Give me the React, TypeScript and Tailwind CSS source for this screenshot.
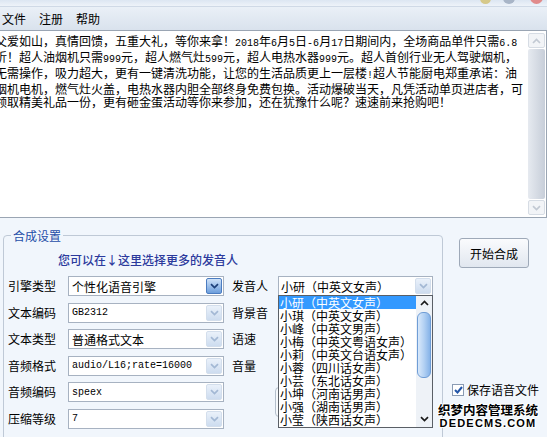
import React from 'react';

const textLines = [
  '父爱如山，真情回馈，五重大礼，等你来拿！2018年6月5日-6月17日期间内，全场商品单件只需6.8',
  '折！超人油烟机只需999元，超人燃气灶599元，超人电热水器999元。超人首创行业无人驾驶烟机，',
  '无需操作，吸力超大，更有一键清洗功能，让您的生活品质更上一层楼!超人节能厨电郑重承诺：油',
  '烟机电机，燃气灶火盖，电热水器内胆全部终身免费包换。活动爆破当天，凡凭活动单页进店者，可',
  '领取精美礼品一份，更有砸金蛋活动等你来参加，还在犹豫什么呢？速速前来抢购吧！',
];

const speakers = [
  '小研（中英文女声）',
  '小琪（中英文女声）',
  '小峰（中英文男声）',
  '小梅（中英文粤语女声）',
  '小莉（中英文台语女声）',
  '小蓉（四川话女声）',
  '小芸（东北话女声）',
  '小坤（河南话男声）',
  '小强（湖南话男声）',
  '小莹（陕西话女声）',
];

const rows = [
  { label: '引擎类型', value: '个性化语音引擎', mono: false, active: true, right: '发音人' },
  { label: '文本编码', value: 'GB2312', mono: true, active: false, right: '背景音' },
  { label: '文本类型', value: '普通格式文本', mono: false, active: false, right: '语速' },
  { label: '音频格式', value: 'audio/L16;rate=16000', mono: true, active: false, right: '音量' },
  { label: '音频编码', value: 'speex', mono: true, active: false, right: '' },
  { label: '压缩等级', value: '7', mono: true, active: false, right: '' },
];

// half-width runs (digits etc.) get a narrow mono font so widths match the old bitmap font
const renderLine = (line: string) =>
  line.split(/([\x21-\x7e]+)/).map((part, i) =>
    /^[\x21-\x7e]+$/.test(part) ? (
      <span key={i} className="font-['Liberation_Mono',monospace] text-[10px]">
        {part}
      </span>
    ) : (
      <span key={i}>{part}</span>
    )
  );

const Chevron = ({ up = false, color }: { up?: boolean; color: string }) => (
  <svg width="9" height="6" viewBox="0 0 9 6">
    <polyline
      points={up ? '1,5 4.5,1.5 8,5' : '1,1.2 4.5,4.6 8,1.2'}
      fill="none"
      stroke={color}
      strokeWidth="1.7"
    />
  </svg>
);

const DropButton = ({ active }: { active: boolean }) =>
  active ? (
    <div className="mr-[1px] ml-auto flex h-[16px] w-[16px] shrink-0 items-center justify-center rounded-[2px] border border-[#4b7cc0] bg-gradient-to-b from-[#cfe2f8] to-[#6c9edc]">
      <Chevron color="#1d3f78" />
    </div>
  ) : (
    <div className="mr-[1px] ml-auto flex h-[16px] w-[16px] shrink-0 items-center justify-center rounded-[2px] border border-[#d3deec] bg-gradient-to-b from-[#eaf1fa] to-[#cddcef]">
      <Chevron color="#a3b8d4" />
    </div>
  );

export default function App() {
  return (
    <div className="relative flex h-[437px] w-[547px] flex-col overflow-hidden bg-[#f1f6fc] font-['Noto_Sans_CJK_SC',sans-serif] text-[12px] leading-[13px] text-black">
      {/* title bar remnant */}
      <div className="flex h-[7px] shrink-0 items-start border-b border-[#cfd9e6] bg-gradient-to-b from-[#dce6f2] to-[#eef3f9]">
        <span className="-mt-[10px] ml-[480px] h-[14px] w-[11px] rounded-full bg-[#d6c98a]" />
        <span className="-mt-[10px] ml-[12px] h-[14px] w-[12px] rounded-full bg-[#a8b5c7]" />
        <span className="-mt-[10px] ml-[15px] h-[14px] w-[13px] rounded-full bg-[#e18b8b]" />
      </div>

      {/* menu bar */}
      <div className="flex h-[23px] shrink-0 items-center gap-[13px] bg-gradient-to-b from-[#eaf0f7] to-[#d9e2ed] pl-[2px] text-[12px]">
        <span>文件</span>
        <span>注册</span>
        <span>帮助</span>
      </div>

      {/* text area */}
      <div className="flex h-[188px] shrink-0 border-t border-b border-r border-[#9aa5b3] bg-white">
        <div className="min-w-0 flex-1 overflow-hidden pt-[3px]">
          {textLines.map((line) => (
            <div key={line} className="-ml-[5px] whitespace-nowrap text-[12px] leading-[13px]">
              {renderLine(line)}
            </div>
          ))}
        </div>
        <div className="my-[2px] mr-[1px] flex w-[17px] flex-col">
          <div className="flex h-[15px] items-center justify-center rounded-[2px] border border-[#d6dce4] bg-[#f2f4f7]">
            <Chevron up color="#c2c9d3" />
          </div>
          <div className="my-[1px] flex-1 rounded-[2px] bg-gradient-to-r from-[#e6eaf0] to-[#c7ced9]" />
          <div className="flex h-[15px] items-center justify-center rounded-[2px] border border-[#d6dce4] bg-[#f2f4f7]">
            <Chevron color="#c2c9d3" />
          </div>
        </div>
      </div>

      {/* settings */}
      <div className="flex flex-1">
        <fieldset className="mt-[11px] ml-[3px] h-[240px] w-[440px] shrink-0 rounded-[4px] border border-[#bfc9d6]">
          <legend className="ml-[7px] px-[2px] text-[12px] leading-[13px] text-[#1f4ea8]">合成设置</legend>
          <div className="mt-[11px] ml-[54px] text-[12px] leading-[13px] font-medium text-[#2c3a9c]">
            您可以在↓这里选择更多的发音人
          </div>

          <div className="mt-[10px] flex flex-col gap-[6.6px]">
            {rows.map((r, i) => (
              <div key={r.label} className="flex h-[20px] items-start">
                <span className="w-[64px] shrink-0 pt-[3px] pl-[4px] leading-[14px]">{r.label}</span>
                <div className="flex h-[20px] w-[156px] shrink-0 items-center border border-[#a7b2c1] bg-white">
                  <span
                    className={
                      r.mono
                        ? "pl-[3px] font-['Liberation_Mono',monospace] text-[10px]"
                        : 'pl-[3px] text-[12px]'
                    }
                  >
                    {r.value}
                  </span>
                  <DropButton active={r.active} />
                </div>
                <span className="ml-[8px] w-[46px] shrink-0 pt-[3px] leading-[14px]">{r.right}</span>
                {i === 0 && (
                  <div className="relative">
                    <div className="flex h-[20px] w-[155px] items-center border border-[#a7b2c1] bg-white">
                      <span className="pl-[2px]">小研（中英文女声）</span>
                      <DropButton active={false} />
                    </div>
                    {/* open dropdown list */}
                    <div className="absolute top-[19px] left-0 z-10 flex h-[133px] w-[155px] border border-[#5a5f66] bg-white">
                      <div className="flex-1">
                        {speakers.map((s, k) => (
                          <div
                            key={s}
                            className={
                              k === 0
                                ? 'h-[13px] bg-[#3399ff] pl-[1px] leading-[13px] whitespace-nowrap text-white'
                                : 'h-[13px] pl-[1px] leading-[13px] whitespace-nowrap'
                            }
                          >
                            {s}
                          </div>
                        ))}
                      </div>
                      <div className="flex w-[16px] flex-col bg-[#eef2f7]">
                        <div className="flex h-[13px] items-center justify-center">
                          <Chevron up color="#1a1a1a" />
                        </div>
                        <div className="mx-[1px] mt-[3px] h-[66px] rounded-[6px] border border-[#6f9dd6] bg-gradient-to-r from-[#d9e9fb] via-[#b3d1f3] to-[#86b3e8]" />
                        <div className="mt-auto mb-[2px] flex h-[13px] items-center justify-center">
                          <Chevron color="#1a1a1a" />
                        </div>
                      </div>
                    </div>
                  </div>
                )}
                {i === 4 && (
                  <div className="mt-[5px] -ml-[3px] h-[30px] w-[150px] rounded-[4px] border border-[#b4bfcc] bg-[#f6f9fc]" />
                )}
              </div>
            ))}
          </div>
        </fieldset>

        <div className="ml-[9px] flex flex-col">
          <button className="mt-[20px] ml-[7px] h-[30px] w-[70px] rounded-[3px] border border-[#9ea9b8] bg-gradient-to-b from-[#fafbfd] to-[#e1e7ef] text-[12px] text-black">
            开始合成
          </button>
          <label className="mt-[115px] flex items-center gap-[3px]">
            <span className="flex h-[12px] w-[12px] items-center justify-center border border-[#8a9bb3] bg-white">
              <svg width="9" height="8" viewBox="0 0 9 8">
                <polyline points="1,4 3.5,6.5 8,1" fill="none" stroke="#2356a8" strokeWidth="2" />
              </svg>
            </span>
            <span className="text-[12px] leading-[14px]">保存语音文件</span>
          </label>
        </div>
      </div>

      {/* watermark */}
      <div className="absolute right-[9px] bottom-[8px] z-20 flex flex-col items-center font-bold text-black [text-shadow:1px_0_#fff,-1px_0_#fff,0_1px_#fff,0_-1px_#fff,1px_1px_#fff,-1px_-1px_#fff]">
        <span className="text-[12.5px] leading-[14px]">织梦内容管理系统</span>
        <span className="font-['Liberation_Sans',sans-serif] text-[11px] leading-[12px] tracking-[1.2px]">DEDECMS.COM</span>
      </div>
    </div>
  );
}
